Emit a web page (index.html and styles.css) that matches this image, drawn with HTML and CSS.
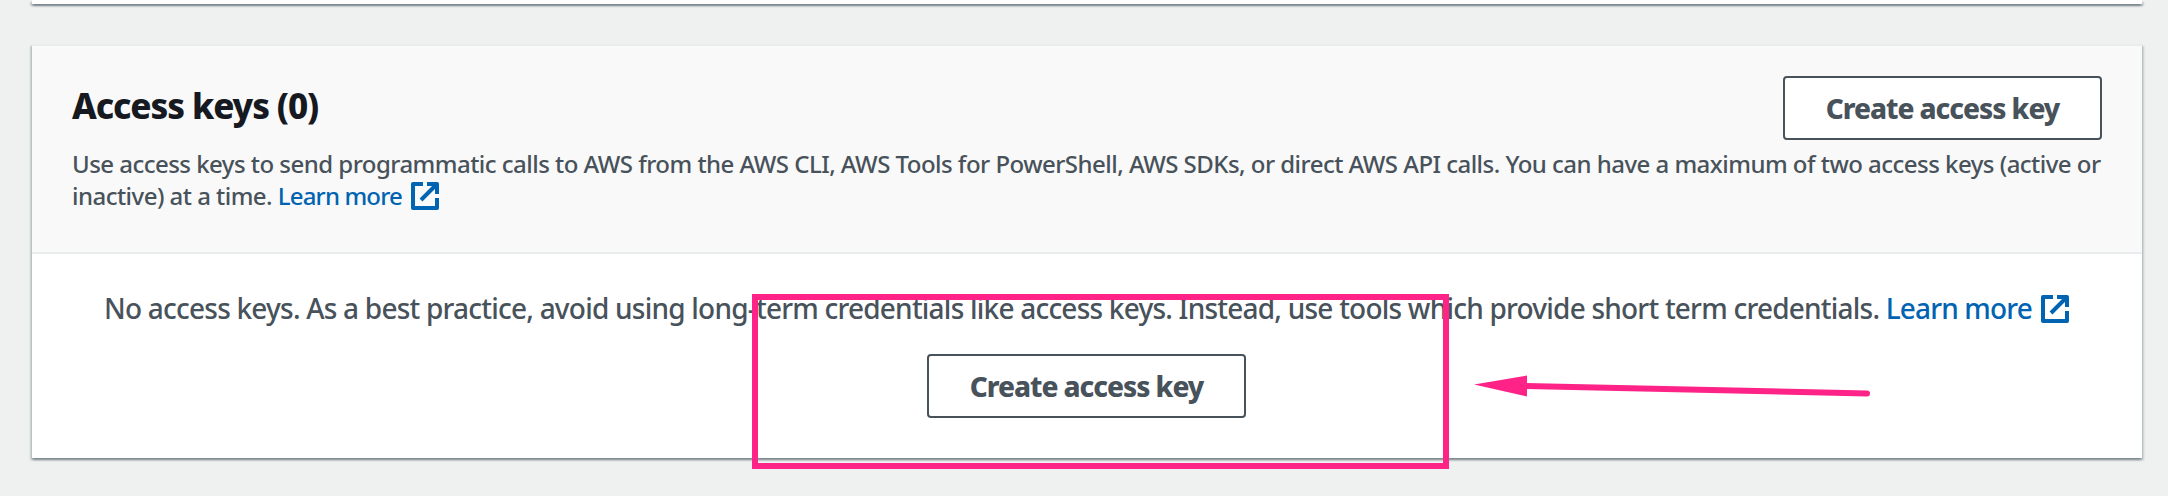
FILE: index.html
```
<!DOCTYPE html>
<html lang="en">
<head>
<meta charset="utf-8">
<title>Access keys</title>
<link rel="stylesheet" href="styles.css">
</head>
<body>
<main class="page">
  <section class="card card-previous"></section>
  <section class="card">
    <header class="card-header">
      <div class="title-row">
        <h2 class="title">Access keys (0)</h2>
        <button class="button">Create access key</button>
      </div>
      <p class="description">Use access keys to send programmatic calls to AWS from the AWS CLI, AWS Tools for PowerShell, AWS SDKs, or direct AWS API calls. You can have a maximum of two access keys (active or<br>inactive) at a time. <a class="link">Learn more<svg class="external" viewBox="0 0 28 28"><path d="M12 2H2V26H26V16M16 2H26V12M25 3L10 18"/></svg></a></p>
    </header>
    <div class="card-body">
      <p class="empty">No access keys. As a best practice, avoid using long-term credentials like access keys. Instead, use tools which provide short term credentials. <a class="link">Learn more<svg class="external" viewBox="0 0 28 28"><path d="M12 2H2V26H26V16M16 2H26V12M25 3L10 18"/></svg></a></p>
      <button class="button">Create access key</button>
    </div>
  </section>
</main>
<div class="highlight"></div>
<svg class="arrow" viewBox="0 0 400 24"><path class="arrow-line" d="M52 12L393 19.500"/><path class="arrow-head" d="M0 10.500L53 1.500V22.500Z"/></svg>
</body>
</html>
```

FILE: styles.css
```
* { box-sizing: border-box; }

body {
  margin: 0;
  height: 496px;
  overflow: hidden;
  position: relative;
  background: #eff1f1;
  color: #48525b;
  font-family: "Noto Sans", "Open Sans", sans-serif;
  font-weight: 500;
}

.page {
  display: flex;
  flex-direction: column;
  gap: 40px;
  padding: 0 26px 0 32px;
}

.card {
  width: 2110px;
  background: #fff;
  border-top: 2px solid #e9ecec;
  box-shadow: 0 2px 2px rgba(0, 28, 36, .3), 2px 2px 2px rgba(0, 28, 36, .15), -2px 2px 2px rgba(0, 28, 36, .15);
}

.card-previous {
  height: 4px;
  border-top: 0;
}

.card-header {
  height: 208px;
  padding: 30px 40px;
  background: #f9f9f9;
  border-bottom: 2px solid #e9eded;
}

.title-row {
  display: flex;
  justify-content: space-between;
  align-items: flex-start;
}

.title {
  margin: 8px 0 0;
  color: #16191f;
  font-size: 35px;
  line-height: 44px;
  font-weight: 800;
  letter-spacing: -1.1px;
}

.button {
  width: 319px;
  height: 64px;
  padding: 0;
  background: #fff;
  border: 2px solid #48525b;
  border-radius: 4px;
  color: #48525b;
  font: 800 28px/60px "Noto Sans", "Open Sans", sans-serif;
  letter-spacing: -1.05px;
}

.description {
  margin: 8px 0 0;
  font-size: 24px;
  line-height: 32px;
  letter-spacing: -.53px;
  white-space: nowrap;
}

.link {
  color: #0064b2;
  letter-spacing: -.85px;
}

.external {
  width: 28px;
  height: 28px;
  margin-left: 9px;
  vertical-align: -5px;
  border-radius: 2px;
  fill: none;
  stroke: currentColor;
  stroke-width: 4;
}

.card-body {
  display: flex;
  flex-direction: column;
  align-items: center;
  gap: 24px;
  height: 204px;
  padding: 32px 1px 0 0;
}

.empty {
  margin: 0;
  height: 44px;
  font-size: 28px;
  line-height: 44px;
  letter-spacing: -.78px;
  white-space: nowrap;
}

.empty .external { vertical-align: -4px; }

/* Annotations drawn over the page */
.highlight {
  position: absolute;
  left: 752px;
  top: 294px;
  width: 697px;
  height: 175px;
  border: 6px solid #ff2387;
}

.arrow {
  position: absolute;
  left: 1474px;
  top: 374px;
  width: 400px;
  height: 24px;
}

.arrow-line {
  stroke: #ff2387;
  stroke-width: 6;
  stroke-linecap: round;
}

.arrow-head { fill: #ff2387; }
```
